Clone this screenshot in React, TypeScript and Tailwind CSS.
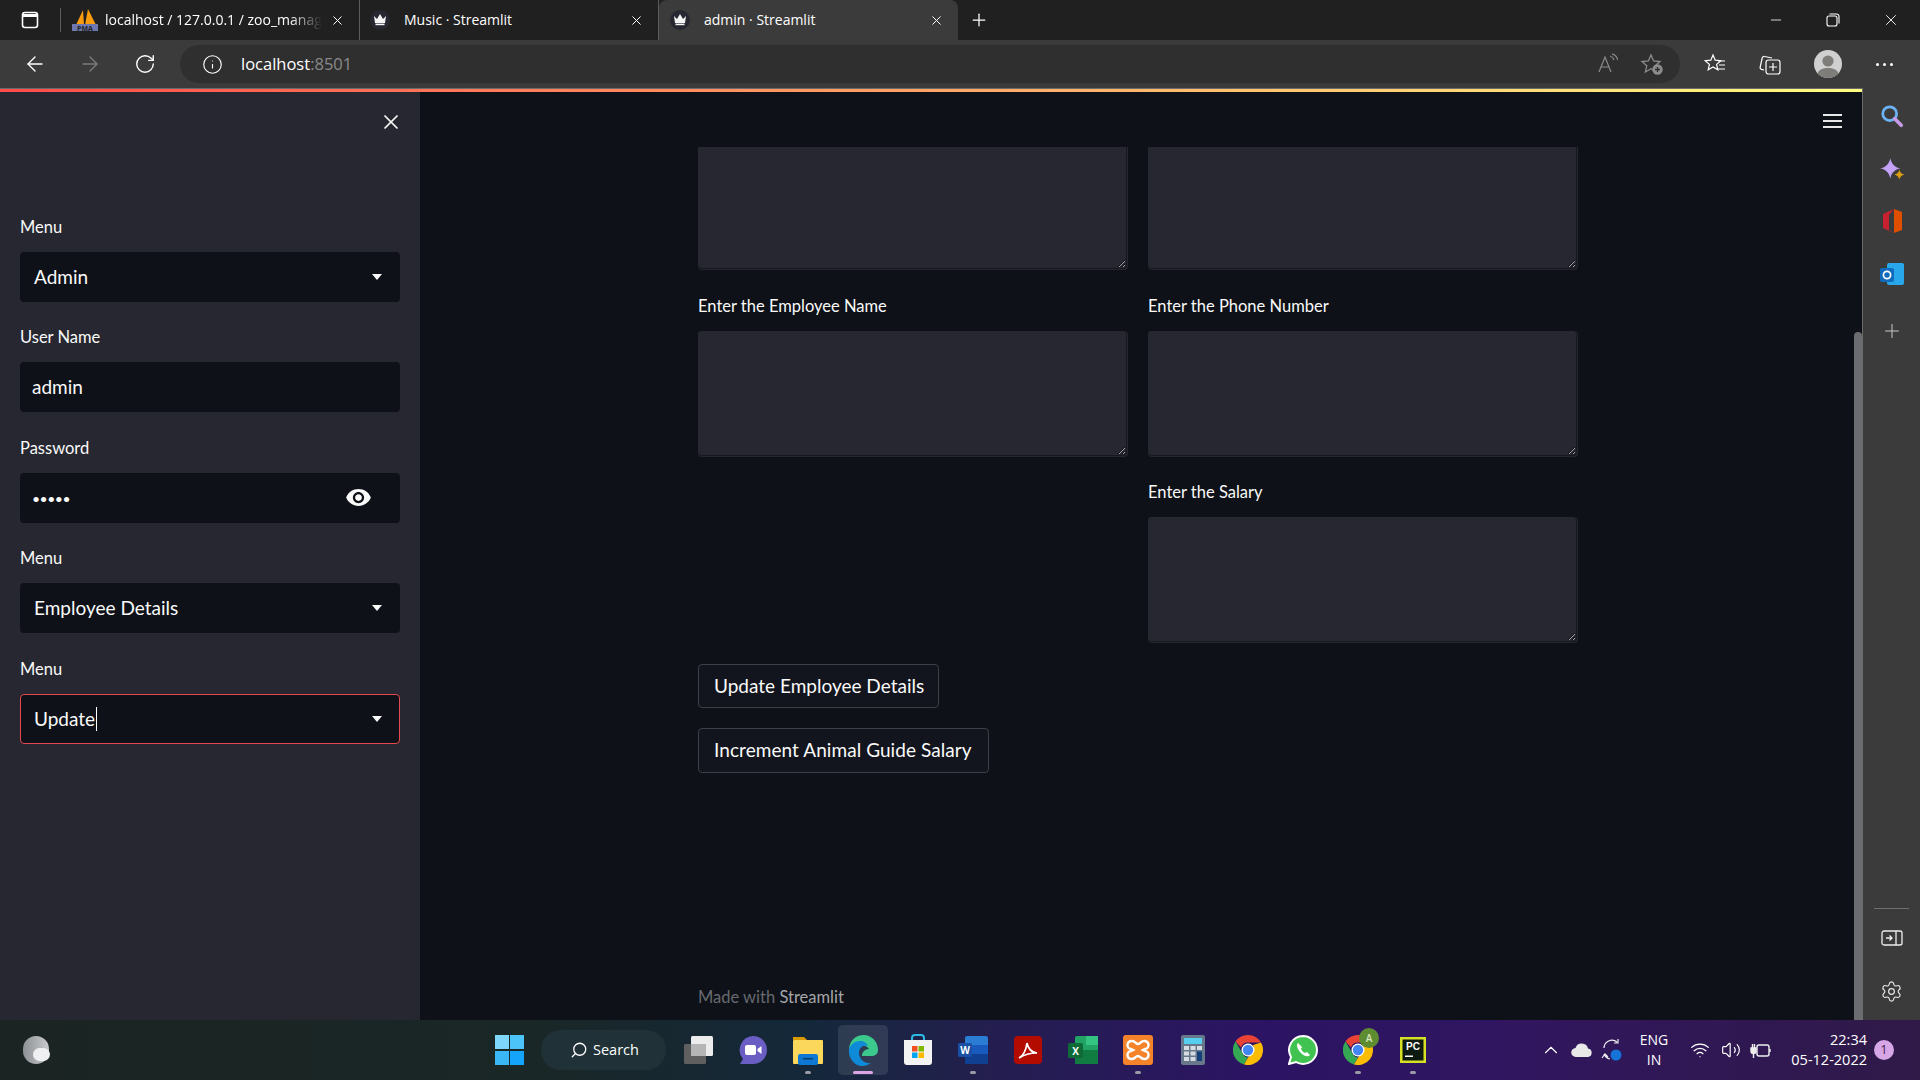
import type { ReactNode } from "react";
import { ArrowLeft, ArrowRight, ChevronUp, Info, Minus, Plus, RotateCw, Search, Settings, Volume2, Wifi, X } from "lucide-react";

const UI_FONT = "font-['Open_Sans','Noto_Sans',sans-serif]";
const ST_FONT = "font-['Lato','Noto_Sans',sans-serif]";

function Crown() {
  return (
    <span className="flex h-[20px] w-[20px] shrink-0 items-center justify-center rounded-full bg-[#262730]">
      <svg width="14" height="12" viewBox="0 0 14 12" fill="#f5f5f5">
        <path d="M1 2l3 3 3-5 3 5 3-3-1 7H2z" />
        <rect x="2.5" y="9.6" width="9" height="1.6" />
      </svg>
    </span>
  );
}

function PmaLogo() {
  return (
    <svg width="28" height="26" viewBox="0 0 28 26" className="shrink-0">
      <path d="M5 18L12 3l1 15z" fill="#f89c0e" />
      <path d="M14 18l3-16 8 16z" fill="#f89c0e" />
      <rect x="1" y="17" width="26" height="7" fill="#6c78af" />
      <text x="14" y="23.5" textAnchor="middle" fontSize="7" fontWeight="700" fill="#222">PMA</text>
    </svg>
  );
}

function Tab({ icon, title, active, fade }: { icon: ReactNode; title: string; active?: boolean; fade?: boolean }) {
  return (
    <div className={`flex h-[40px] w-[299px] items-center pr-[14px] ${active ? "rounded-t-[8px] bg-[#3b3b3b] pl-[11px]" : "border-r border-[#5c5c5c] pl-[10px]"}`}>
      <span className="flex w-[34px] shrink-0 items-center">{icon}</span>
      <span className={`min-w-0 flex-1 overflow-hidden whitespace-nowrap pb-[2px] text-[14px] text-white ${fade ? "mr-[8px] [mask-image:linear-gradient(90deg,#000_85%,transparent)]" : ""}`}>{title}</span>
      <X size={15} strokeWidth={1.6} className="shrink-0 text-white" />
    </div>
  );
}

function TabBar() {
  return (
    <div className="flex h-[40px] items-end bg-[#202020] text-white">
      <div className="flex h-[40px] w-[60px] items-center pl-[21px]">
        <svg width="18" height="18" viewBox="0 0 18 18" fill="none" stroke="#fff" strokeWidth="1.6">
          <rect x="1.5" y="1.5" width="15" height="15" rx="2.5" />
          <path d="M1.5 4.5h15" strokeWidth="3" />
        </svg>
      </div>
      <div className="mb-[8px] h-[24px] w-px shrink-0 self-end bg-[#5c5c5c]" />
      <Tab icon={<PmaLogo />} title="localhost / 127.0.0.1 / zoo_management" fade />
      <Tab icon={<Crown />} title="Music · Streamlit" />
      <Tab icon={<Crown />} title="admin · Streamlit" active />
      <div className="flex h-[40px] w-[40px] items-center justify-center pl-[2px]">
        <Plus size={20} strokeWidth={1.5} />
      </div>
      <div className="ml-auto flex h-[40px] items-center">
        <div className="flex w-[57px] justify-center"><Minus size={16} strokeWidth={1.2} /></div>
        <div className="flex w-[58px] justify-center">
          <svg width="14" height="14" viewBox="0 0 14 14" fill="none" stroke="#fff" strokeWidth="1.1">
            <rect x="1" y="3" width="10" height="10" rx="2" />
            <path d="M3.5 1h7A2.5 2.5 0 0 1 13 3.5v7" />
          </svg>
        </div>
        <div className="flex w-[58px] justify-center"><X size={18} strokeWidth={1.2} /></div>
      </div>
    </div>
  );
}

function Toolbar() {
  return (
    <div className="flex h-[48px] items-center bg-[#3b3b3b] text-white">
      <div className="flex w-[180px] shrink-0 items-center pl-[23px]">
        <ArrowLeft size={24} strokeWidth={1.4} />
        <ArrowRight size={24} strokeWidth={1.4} className="ml-[31px] text-[#7b7b7b]" />
        <RotateCw size={22} strokeWidth={1.5} className="ml-[32px]" />
      </div>
      <div className="flex h-[38px] w-[1500px] items-center rounded-full bg-[#2f2f2f] pl-[22px] pr-[16px]">
        <Info size={21} strokeWidth={1.3} />
        <span className="ml-[18px] text-[16.5px]">localhost<span className="text-[#8a8a8a]">:8501</span></span>
        <div className="ml-auto flex items-center gap-[21px]">
          <svg width="22" height="22" viewBox="0 0 22 22" fill="none" stroke="#8c8c8c" strokeWidth="1.2">
            <path d="M2 19L8 4l6 15M4.5 14h7" />
            <path d="M13 3c2 .6 3.5 2.2 4 4M15 .8c3 .8 5 3 5.6 6" />
          </svg>
          <svg width="24" height="24" viewBox="0 0 24 24" fill="none" stroke="#8c8c8c" strokeWidth="1.3">
            <path d="M11 3l2.6 6 6.4.6-4.8 4.2 1.4 6.2-5.6-3.2L5.4 20l1.4-6.2L2 9.6 8.4 9z" />
            <circle cx="17.5" cy="17.5" r="5.2" fill="#8c8c8c" stroke="none" />
            <path d="M17.5 15v5M15 17.5h5" stroke="#2f2f2f" strokeWidth="1.4" />
          </svg>
        </div>
      </div>
      <div className="flex flex-1 items-center">
        <div className="flex w-[70px] justify-center">
          <svg width="22" height="22" viewBox="0 0 22 22" fill="none" stroke="#fff" strokeWidth="1.2">
            <path d="M9 2l2.2 5.2 5.6.5-4.2 3.7 1.2 5.4L9 13.9l-4.8 2.9 1.2-5.4L1.2 7.7l5.6-.5z" />
            <path d="M14 8h7M15 12h6M13 16h8" />
          </svg>
        </div>
        <div className="flex w-[39px] justify-center">
          <svg width="22" height="22" viewBox="0 0 22 22" fill="none" stroke="#fff" strokeWidth="1.2">
            <path d="M5 17l-2.4-.6a2 2 0 0 1-1.4-2.4l2-9a2 2 0 0 1 2.4-1.5L13 5" />
            <rect x="7" y="7" width="14" height="14" rx="2.5" />
            <path d="M14 10v8M10 14h8" />
          </svg>
        </div>
        <div className="flex w-[77px] justify-center">
          <svg width="28" height="28" viewBox="0 0 28 28">
            <circle cx="14" cy="14" r="14" fill="#d0d0d0" />
            <circle cx="14" cy="11" r="5.6" fill="#7f7d7a" />
            <path d="M3.6 23.4C5 19.4 9 18 14 18s9 1.4 10.4 5.4A14 14 0 0 1 3.6 23.4z" fill="#7f7d7a" />
          </svg>
        </div>
        <div className="flex w-[37px] justify-center gap-[4px]">
          <span className="h-[3px] w-[3px] rounded-full bg-white" />
          <span className="h-[3px] w-[3px] rounded-full bg-white" />
          <span className="h-[3px] w-[3px] rounded-full bg-white" />
        </div>
      </div>
    </div>
  );
}

function Caret() {
  return <span className="h-0 w-0 border-x-[5.5px] border-t-[6px] border-x-transparent border-t-[#fafafa]" />;
}

function Field({ label, children }: { label: string; children: ReactNode }) {
  return (
    <div>
      <div className="mb-[14px] h-[22px] text-[16.5px] leading-[22px] text-[#fafafa]">{label}</div>
      {children}
    </div>
  );
}

function SelectBox({ value, focused }: { value: string; focused?: boolean }) {
  return (
    <div className={`flex h-[50px] items-center rounded-[4px] bg-[#0e1117] text-[19px] text-[#fafafa] ${focused ? "border border-[#e5484d] pl-[13px] pr-[17px]" : "pl-[14px] pr-[18px]"}`}>
      <span>{value}</span>
      {focused && <span className="ml-[1px] h-[24px] w-px bg-white" />}
      <span className="ml-auto flex items-center"><Caret /></span>
    </div>
  );
}

function Sidebar() {
  return (
    <aside className="flex w-[420px] shrink-0 flex-col bg-[#262730] px-[20px]">
      <div className="-mr-[3px] flex h-[60px] items-center justify-end">
        <X size={24} strokeWidth={1.7} className="text-[#fafafa]" />
      </div>
      <div className="mt-[63.9px] flex flex-col gap-[24.5px]">
        <Field label="Menu"><SelectBox value="Admin" /></Field>
        <Field label="User Name">
          <input readOnly defaultValue="admin" className="h-[50px] w-full rounded-[4px] bg-[#0e1117] px-[12px] pb-[2px] text-[19px] text-[#fafafa] outline-none" />
        </Field>
        <Field label="Password">
          <div className="flex h-[50px] items-center rounded-[4px] bg-[#0e1117] pl-[12px] pr-[28px]">
            <input readOnly type="password" defaultValue="admin" className="w-[150px] translate-y-px bg-transparent text-[14px] tracking-[-0.5px] text-[#fafafa] outline-none" />
            <svg width="27" height="27" viewBox="0 0 24 24" fill="#fafafa" className="ml-auto">
              <path d="M12 4.500C7 4.500 2.730 7.610 1 12c1.730 4.390 6 7.500 11 7.500s9.270-3.110 11-7.500c-1.730-4.390-6-7.500-11-7.500zM12 17c-2.760 0-5-2.240-5-5s2.240-5 5-5 5 2.240 5 5-2.240 5-5 5zm0-8c-1.660 0-3 1.340-3 3s1.340 3 3 3 3-1.340 3-3-1.340-3-3-3z" />
            </svg>
          </div>
        </Field>
        <Field label="Menu"><SelectBox value="Employee Details" /></Field>
        <Field label="Menu"><SelectBox value="Update" focused /></Field>
      </div>
    </aside>
  );
}

function Area({ h, clipped }: { h: string; clipped?: boolean }) {
  return (
    <div className={`bg-[#262730] pb-px pr-px ${clipped ? "rounded-b-[4px]" : "rounded-[4px]"}`}>
      <textarea
        readOnly
        className={`block w-full border-b border-r border-[#17181f] bg-[#262730] outline-none [color-scheme:dark] ${h} ${clipped ? "rounded-b-[4px]" : "rounded-[4px]"}`}
      />
    </div>
  );
}

function MainLabel({ children, mt }: { children: ReactNode; mt: string }) {
  return <div className={`mb-[14px] h-[22px] text-[16.5px] leading-[22px] text-[#fafafa] ${mt}`}>{children}</div>;
}

function OutlineButton({ children, w }: { children: ReactNode; w: string }) {
  return (
    <button type="button" className={`whitespace-nowrap rounded-[4px] border border-[#3d3f47] bg-[#12151d] px-[15px] text-left text-[19px] text-[#fafafa] ${w}`}>
      {children}
    </button>
  );
}

function MainPane() {
  return (
    <main className="relative flex min-w-0 flex-1 flex-col bg-[#0e1117] pl-[278px] pt-[55px]">
      <svg width="19" height="14" viewBox="0 0 19 14" fill="#e8e8e8" className="absolute right-[20px] top-[22px]">
        <rect width="19" height="2" />
        <rect y="6" width="19" height="2" />
        <rect y="12" width="19" height="2" />
      </svg>
      <div className="flex w-[880px] gap-[20px]">
        <div className="w-[430px]">
          <Area h="h-[122px]" clipped />
          <MainLabel mt="mt-[25px]">Enter the Employee Name</MainLabel>
          <Area h="h-[125px]" />
        </div>
        <div className="w-[430px]">
          <Area h="h-[122px]" clipped />
          <MainLabel mt="mt-[25px]">Enter the Phone Number</MainLabel>
          <Area h="h-[125px]" />
          <MainLabel mt="mt-[24px]">Enter the Salary</MainLabel>
          <Area h="h-[125px]" />
        </div>
      </div>
      <div className="mt-[21px] flex flex-col items-start gap-[20px]">
        <OutlineButton w="h-[44px] w-[241px]">Update Employee Details</OutlineButton>
        <OutlineButton w="h-[45px] w-[291px] tracking-[0.07px]">Increment Animal Guide Salary</OutlineButton>
      </div>
      <div className="mt-auto pb-[12px] text-[16.5px] leading-[22px] text-[#676a70]">
        Made with <span className="text-[#a5a6a9]">Streamlit</span>
      </div>
      {/* page scrollbar */}
      <div className="absolute bottom-0 right-0 top-[240px] w-[8px] rounded-t-[4px] bg-[#6b6c70]" />
    </main>
  );
}

function SideRail() {
  return (
    <div className="flex w-[58px] shrink-0 flex-col items-center border-l border-[#6a6a6a] bg-[#3b3b3b] pt-[16px] text-[#e8e8e8]">
      <div className="flex flex-col items-center">
        <svg width="24" height="24" viewBox="0 0 26 26" fill="none">
          <circle cx="10.5" cy="10.5" r="7.5" stroke="#6cb2f5" strokeWidth="3" />
          <path d="M16 16l7 7" stroke="#c79be8" strokeWidth="4" strokeLinecap="round" />
        </svg>
        <svg width="26" height="26" viewBox="0 0 23 23" className="mt-[29px]">
          <path d="M10 1c1 5 4 8 9 9-5 1-8 4-9 9-1-5-4-8-9-9 5-1 8-4 9-9z" fill="#c4a2f8" />
          <path d="M18 11c.5 2.500 2 4 4.500 4.500-2.500.5-4 2-4.500 4.500-.5-2.500-2-4-4.500-4.500 2.500-.5 4-2 4.500-4.500z" fill="#d99c10" />
        </svg>
        <svg width="24" height="26" viewBox="0 0 24 26" className="mt-[25px]">
          <path d="M14 1l8 3v18l-8 3z" fill="#e04e00" />
          <path d="M14 1L3 6v14l11 5-5-3V7z" fill="#c8202f" />
          <path d="M9 7l5-1v15l-5-1z" fill="#3b3b3b" />
        </svg>
        <svg width="26" height="26" viewBox="0 0 26 26" className="mt-[26.500px]">
          <rect x="8" y="2" width="17" height="22" rx="2" fill="#28a8ea" />
          <rect x="1" y="7" width="14" height="14" rx="2" fill="#0f6cbd" />
          <circle cx="8" cy="14" r="3.6" fill="none" stroke="#fff" strokeWidth="1.7" />
        </svg>
        <Plus size={22} strokeWidth={1.1} className="mt-[33.500px] text-[#c8c8c8]" />
      </div>
      <div className="mt-auto h-px w-[35px] bg-[#6f6f6f]" />
      <svg width="22" height="18" viewBox="0 0 22 18" fill="none" stroke="#eee" strokeWidth="1.3" className="mt-[21px]">
        <rect x="1" y="1" width="20" height="14" rx="2" />
        <path d="M15 1v14M5 8h6M8.500 5.500L11 8l-2.500 2.500" />
      </svg>
      <Settings size={23} strokeWidth={1.2} className="mb-[17px] mt-[32px]" />
    </div>
  );
}

function TaskIcon({ children, dot, active }: { children: ReactNode; dot?: boolean; active?: boolean }) {
  return (
    <div className={`relative flex h-[50px] w-[50px] items-center justify-center rounded-[5px] ${active ? "bg-white/10" : ""}`}>
      {children}
      {dot && <span className="absolute bottom-[1px] h-[3px] w-[6px] rounded-full bg-[#9a9aa6]" />}
      {active && <span className="absolute bottom-[1px] h-[3px] w-[20px] rounded-full bg-[#dca5e8]" />}
    </div>
  );
}

function Chrome({ badge }: { badge?: boolean }) {
  return (
    <div className="relative">
      <svg width="30" height="30" viewBox="0 0 30 30">
        <path d="M15 0a15 15 0 0 1 13 7.500H15a7.500 7.500 0 0 0-7 5L2.500 6.500A15 15 0 0 1 15 0z" fill="#ea4335" />
        <path d="M2.500 6.500L9 17.500a7.500 7.500 0 0 0 6 5l-4 7A15 15 0 0 1 2.500 6.500z" fill="#34a853" />
        <path d="M28 7.500A15 15 0 0 1 11 29.500l6.500-11A7.500 7.500 0 0 0 20 10z" fill="#fbbc04" />
        <circle cx="15" cy="15" r="6.500" fill="#fff" />
        <circle cx="15" cy="15" r="5.200" fill="#4285f4" />
      </svg>
      {badge && (
        <span className="absolute -right-[6px] -top-[7px] flex h-[20px] w-[20px] items-center justify-center rounded-full bg-[#5e8c31] text-[10px] font-semibold text-[#d5e4bf]">A</span>
      )}
    </div>
  );
}

function Taskbar() {
  return (
    <footer className="flex h-[60px] shrink-0 items-center bg-[linear-gradient(90deg,#1b2422_0%,#1a2727_28%,#14283a_42%,#241e50_52%,#2c1464_66%,#301660_78%,#2f1a48_100%)] text-white">
      <div className="flex w-[484.5px] shrink-0 pl-[23px]">
        <div className="relative h-[28px] w-[28px]">
          <span className="absolute left-0 top-0 h-[28px] w-[26px] rounded-full bg-[linear-gradient(90deg,#8d9094,#c9cbce)]" />
          <span className="absolute left-[10px] top-[12px] h-[13px] w-[17px] rounded-full bg-[#eef0f2]" />
        </div>
      </div>
      <div className="flex w-[50px] justify-center">
        <div className="grid h-[30px] w-[29px] grid-cols-2 gap-[1.500px]">
          <span className="bg-[#7ed8fb]" /><span className="bg-[#4cc4fa]" />
          <span className="bg-[#3ab6f5]" /><span className="bg-[#14a4fa]" />
        </div>
      </div>
      <div className="ml-[6.500px] flex h-[40px] w-[125px] items-center rounded-full bg-[#203238] pl-[29px] text-[14.5px]">
        <Search size={18} strokeWidth={1.7} className="-scale-x-100" />
        <span className="ml-[5px]">Search</span>
      </div>
      <div className="ml-[7px] flex items-center gap-[5px]">
        <TaskIcon>
          <svg width="30" height="30" viewBox="0 0 30 30">
            <rect x="1" y="9" width="22" height="20" rx="1.500" fill="#5f5f5f" />
            <rect x="8" y="1" width="22" height="20" rx="1.500" fill="#ececec" />
            <rect x="8" y="9" width="15" height="12" fill="#b5b5b5" />
          </svg>
        </TaskIcon>
        <TaskIcon>
          <svg width="30" height="30" viewBox="0 0 30 30">
            <path d="M15 1a14 14 0 0 1 0 28H2l3-5A14 14 0 0 1 15 1z" fill="#6a5ec4" />
            <rect x="7" y="10" width="11" height="10" rx="2" fill="#fff" />
            <path d="M19.500 14l4-3v8l-4-3z" fill="#fff" />
          </svg>
        </TaskIcon>
        <TaskIcon dot>
          <svg width="32" height="30" viewBox="0 0 32 30">
            <path d="M1 2h11l3 3H1z" fill="#d99a00" />
            <rect x="1" y="5" width="30" height="24" rx="1" fill="#fbd75b" />
            <rect x="6" y="19" width="20" height="11" rx="2" fill="#0f78d4" />
            <rect x="11" y="23" width="10" height="1.500" fill="#07406f" />
          </svg>
        </TaskIcon>
        <TaskIcon active>
          <svg width="30" height="32" viewBox="0 0 30 32">
            <path d="M1 15C2 6 8 1 15.500 1 24 1 30 8 30 16c0 4-3 6-7 6H14c0-4 3-7 7-7-2-3-5-4-8-4-6 0-10 2-12 4z" fill="#3bc98d" />
            <path d="M1 15c2-5 6-8 11-8 4 0 7 2 8 5-4-2-9 1-9 7 0 6 5 11 12 10-3 2-5 3-9 3C7 32 0 25 1 15z" fill="#0f8ad8" />
          </svg>
        </TaskIcon>
        <TaskIcon>
          <svg width="30" height="32" viewBox="0 0 30 32">
            <path d="M9 8V4a3 3 0 0 1 3-3h6a3 3 0 0 1 3 3v4" fill="none" stroke="#2eb8e6" strokeWidth="2" />
            <path d="M1 6h28v22a3 3 0 0 1-3 3H4a3 3 0 0 1-3-3z" fill="#f3f3f3" />
            <rect x="9" y="12" width="5.500" height="5.500" fill="#f25022" /><rect x="15.500" y="12" width="5.500" height="5.500" fill="#7fba00" />
            <rect x="9" y="18.500" width="5.500" height="5.500" fill="#00a4ef" /><rect x="15.500" y="18.500" width="5.500" height="5.500" fill="#ffb900" />
          </svg>
        </TaskIcon>
        <TaskIcon dot>
          <svg width="30" height="30" viewBox="0 0 30 30">
            <rect x="7" y="1" width="23" height="28" rx="2" fill="#2b7cd3" />
            <rect x="7" y="10" width="23" height="9" fill="#185abd" />
            <rect x="7" y="19" width="23" height="10" fill="#103f91" />
            <rect x="0" y="8" width="14" height="14" rx="1.500" fill="#1a4fa5" />
            <text x="7" y="19" textAnchor="middle" fontSize="10" fontWeight="700" fill="#fff">W</text>
          </svg>
        </TaskIcon>
        <TaskIcon>
          <svg width="28" height="28" viewBox="0 0 28 28">
            <rect width="28" height="28" rx="4" fill="#b30b00" />
            <path d="M5 22c4-2 7-8 8-15 1 6 4 9 10 10-6 0-12 1-18 5z" fill="none" stroke="#fff" strokeWidth="1.700" />
          </svg>
        </TaskIcon>
        <TaskIcon>
          <svg width="30" height="28" viewBox="0 0 30 28">
            <rect x="7" y="0" width="23" height="28" rx="2" fill="#21a366" />
            <rect x="18" y="0" width="12" height="9" fill="#33c481" />
            <rect x="7" y="14" width="23" height="14" fill="#107c41" />
            <rect x="0" y="7" width="15" height="15" rx="1.500" fill="#0e6b37" />
            <text x="7.500" y="18.500" textAnchor="middle" fontSize="10" fontWeight="700" fill="#fff">X</text>
          </svg>
        </TaskIcon>
        <TaskIcon dot>
          <svg width="30" height="30" viewBox="0 0 30 30">
            <rect width="30" height="30" rx="3" fill="#f5832a" />
            <path d="M9 6a4 4 0 0 0-1 8l2 1-2 1a4 4 0 0 0 1 8c3 0 4-3 6-3s3 3 6 3a4 4 0 0 0 1-8l-2-1 2-1a4 4 0 0 0-1-8c-3 0-4 3-6 3S12 6 9 6z" fill="none" stroke="#fff" strokeWidth="2.400" />
          </svg>
        </TaskIcon>
        <TaskIcon>
          <svg width="24" height="30" viewBox="0 0 24 30">
            <rect width="24" height="30" rx="2" fill="#67788a" />
            <rect x="3" y="3" width="18" height="6" fill="#57cdf0" />
            <path d="M3 11h5v4H3zM9.500 11h5v4h-5zM3 16.500h5v4H3zM9.500 16.500h5v4h-5zM3 22h5v4H3zM9.500 22h5v4h-5z" fill="#d5dbe0" />
            <rect x="16" y="16.500" width="5" height="9.500" fill="#14407a" />
            <rect x="16" y="11" width="5" height="4" fill="#d5dbe0" />
          </svg>
        </TaskIcon>
        <TaskIcon><Chrome /></TaskIcon>
        <TaskIcon>
          <svg width="30" height="30" viewBox="0 0 30 30">
            <path d="M15 1a14 14 0 0 1 0 28 14 14 0 0 1-7-2L1 29l2-7A14 14 0 0 1 15 1z" fill="#40c351" stroke="#fff" strokeWidth="2" />
            <path d="M10 8c-2 2-1 6 3 10s7 4 9 2l-3-3-2 1c-2-1-3-2-4-4l1-2z" fill="#fff" />
          </svg>
        </TaskIcon>
        <TaskIcon dot><Chrome badge /></TaskIcon>
        <TaskIcon dot>
          <svg width="26" height="26" viewBox="0 0 26 26">
            <rect width="26" height="26" fill="#d6e025" />
            <rect x="2.500" y="2.500" width="21" height="21" fill="#0c1a10" />
            <text x="13" y="13" textAnchor="middle" fontSize="10" fontWeight="700" fill="#fff" fontFamily="Liberation Sans">PC</text>
            <rect x="5" y="18.500" width="8" height="1.500" fill="#fff" />
          </svg>
        </TaskIcon>
      </div>
      <div className="ml-auto flex items-center pr-[26px]">
        <ChevronUp size={22} strokeWidth={1.2} />
        <svg width="22" height="16" viewBox="0 0 22 16" className="ml-[9px]">
          <path d="M5 15a4.500 4.500 0 0 1-.5-9A6.500 6.500 0 0 1 17 6.500 4.300 4.300 0 0 1 17 15z" fill="#e8e8e8" />
        </svg>
        <svg width="22" height="24" viewBox="0 0 22 24" fill="none" stroke="#eee" strokeWidth="1.200" className="ml-[8px]">
          <path d="M3 10a8 8 0 0 1 13-6M17 1v4h-4M3 16a8 8 0 0 0 6 5M1 20l3-4 3 3" />
          <circle cx="15" cy="17" r="5.500" fill="#1674d8" stroke="none" />
        </svg>
        <div className="ml-[9.500px] w-[44px] text-center text-[14px] leading-[20px]">ENG<br />IN</div>
        <Wifi size={20} strokeWidth={1.5} className="ml-[14px]" />
        <Volume2 size={20} strokeWidth={1.4} className="ml-[11px]" />
        <svg width="22" height="18" viewBox="0 0 22 18" fill="none" stroke="#eee" strokeWidth="1.400" className="ml-[9px]">
          <rect x="7" y="4" width="12" height="11" rx="2" />
          <path d="M20 8v3" />
          <path d="M1 7h5v3a2.500 2.500 0 0 1-5 0zM2.500 7V3M4.500 7V3M3.500 12.500V17" fill="#eee" />
        </svg>
        <div className="ml-[15px] w-[80px] text-right text-[14.5px] leading-[20px]">22:34<br />05-12-2022</div>
        <span className="ml-[7px] flex h-[20px] w-[20px] items-center justify-center rounded-full bg-[#d7a6e6] text-[12px] text-[#3a2345]">1</span>
      </div>
    </footer>
  );
}

export default function App() {
  return (
    <div className={`flex h-screen w-[1920px] flex-col overflow-hidden bg-[#3b3b3b] ${UI_FONT}`}>
      <TabBar />
      <Toolbar />
      <div className="flex min-h-0 flex-1">
        <div className="flex min-w-0 flex-1 flex-col border-t border-[#6a6a6a]">
          <div className="h-[3px] bg-[linear-gradient(90deg,#ff4b4b,#fffd80)]" />
          <div className={`flex min-h-0 flex-1 ${ST_FONT}`}>
            <Sidebar />
            <MainPane />
          </div>
        </div>
        <SideRail />
      </div>
      <Taskbar />
    </div>
  );
}
